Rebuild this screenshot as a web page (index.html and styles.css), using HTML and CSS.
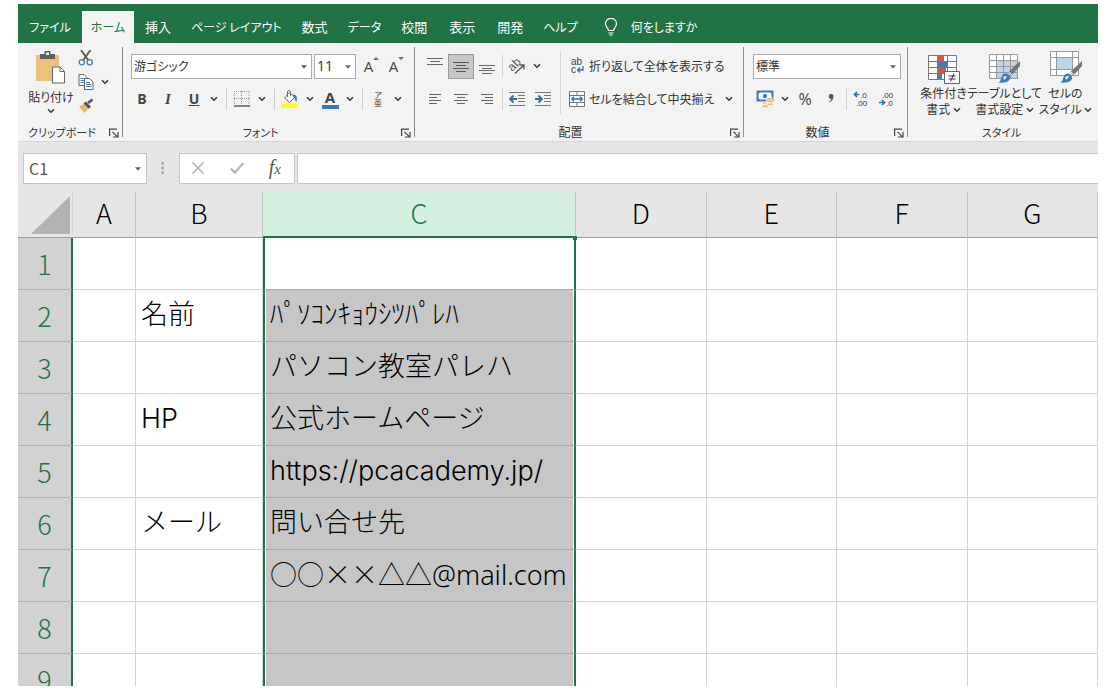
FILE: index.html
```html
<!DOCTYPE html>
<html lang="ja">
<head>
<meta charset="utf-8">
<meta name="viewport" content="width=device-width, initial-scale=1">
<title>Excel</title>
<link rel="stylesheet" href="styles.css">
</head>
<body>
<svg class="defs" aria-hidden="true">
  <symbol id="chev" viewBox="0 0 8 6"><path d="M1 1.2 4 4.2 7 1.2" fill="none" stroke="#333" stroke-width="1.4"/></symbol>
  <symbol id="tri" viewBox="0 0 6 4"><path d="M0 .3h6L3 3.7z" fill="#666"/></symbol>
  <symbol id="launch" viewBox="0 0 10 10"><path d="M.6 8V1.1H8M3.5 3.8l4.6 4.6M9 4v5H4" fill="none" stroke="#444" stroke-width="1.2"/></symbol>
  <symbol id="brush" viewBox="0 0 24 24">
    <path d="M23 1v5l-8.500 9.500-3.500-3.300z" fill="#777"/>
    <path d="m11.500 11.500 3.500 3.500" stroke="#fff" stroke-width="1"/>
    <path d="M1 22.500c3-.5 2.500-4 4-6.500 2-3.200 5.500-3 7.300-.8 1.800 2.300.7 5.300-2.300 6.600-2.500 1.100-6 1-9 .7z" fill="#3d7cba"/>
    <path d="M6 18c.8-2 2.300-2.600 4.300-1.500-1 .4-1.500 2.700-3 3.200z" fill="#dceaf7"/>
  </symbol>
</svg>
<div class="app">
  <nav class="tabs">
    <a class="tab kana file" href="#file">ファイル</a>
    <a class="tab kana active" href="#home">ホーム</a>
    <a class="tab" href="#insert">挿入</a>
    <a class="tab kana" href="#layout">ページ レイアウト</a>
    <a class="tab" href="#formula">数式</a>
    <a class="tab kana" href="#data">データ</a>
    <a class="tab" href="#review">校閲</a>
    <a class="tab" href="#view">表示</a>
    <a class="tab" href="#dev">開発</a>
    <a class="tab kana" href="#help">ヘルプ</a>
    <button class="tell" type="button">
      <svg width="14" height="18" viewBox="0 0 14 18"><path d="M4.500 12.500c0-2.500-3-3.500-3-6.700a5.500 5.500 0 0 1 11 0c0 3.200-3 4.200-3 6.700zM4.500 15h5M5.500 17h3" fill="none" stroke="#fff" stroke-width="1.200"/></svg>
      何をしますか
    </button>
  </nav>

  <div class="ribbon">
    <section class="group clip">
      <div class="body">
        <button class="big paste" type="button">
          <svg width="32" height="34" viewBox="0 0 32 34"><path d="M1 4h23v26H1z" fill="#e9c27b"/><path d="M5 8V3h4.500V0h6v3H20v5z" fill="#5f5f5f"/><path d="M11 1.500h3V4h-3z" fill="#f3f3f3"/><path d="M17.500 16h7.500l4.500 4.500V32h-12z" fill="#fff" stroke="#666"/><path d="M25 16v4.500h4.500" fill="none" stroke="#666"/></svg>
          <span>貼り付け</span>
          <svg width="8" height="6"><use href="#chev"/></svg>
        </button>
        <div class="minis">
          <button class="ico" type="button" aria-label="切り取り"><svg width="16" height="16" viewBox="0 0 16 16"><path d="m3 0 7.500 10.500M12.500 0 5 10.500" stroke="#5a5a5a" stroke-width="1.900"/><circle cx="3.800" cy="12.300" r="2.600" fill="none" stroke="#4a7db8" stroke-width="1.300"/><circle cx="11.700" cy="12.300" r="2.600" fill="none" stroke="#4a7db8" stroke-width="1.300"/></svg></button>
          <div class="pair">
            <button class="ico" type="button" aria-label="コピー"><svg width="16" height="16" viewBox="0 0 16 16"><path d="M1 .5h5l3 3v8H1z" fill="#fff" stroke="#666"/><path d="M2.500 4.500h4M2.500 6.500h4M2.500 8.500h4" stroke="#4a7db8"/><path d="M6.500 4.500h5l3.500 3.500v7.500H6.500z" fill="#fff" stroke="#666"/><path d="M8 8.500h4M8 10.500h5.500M8 12.500h5.500" stroke="#4a7db8"/></svg></button>
            <button class="drop" type="button" aria-label="コピーのオプション"><svg width="8" height="6"><use href="#chev"/></svg></button>
          </div>
          <button class="ico" type="button" aria-label="書式のコピー"><svg width="16" height="16" viewBox="0 0 16 16"><path d="M1 8.500 6 6l4.500 4.500L6.500 15z" fill="#e9b766"/><path d="m5.500 5.500 2.300-2 5.200 5.200-2.300 2z" fill="#555"/><path d="m10 5 4.500-3.500" stroke="#555" stroke-width="2.600"/></svg></button>
        </div>
      </div>
      <footer class="kana"><span>クリップボード</span><button class="launcher" type="button" aria-label="クリップボードの詳細"><svg width="10" height="10"><use href="#launch"/></svg></button></footer>
    </section>

    <section class="group font">
      <div class="row">
        <span class="combo name"><select aria-label="フォント名"><option>游ゴシック</option></select><svg width="6" height="4"><use href="#tri"/></svg></span>
        <span class="combo size"><select aria-label="フォント サイズ"><option>11</option></select><svg width="6" height="4"><use href="#tri"/></svg></span>
        <button class="ico grow" type="button" aria-label="フォント サイズの拡大"><span>A</span><svg width="6" height="4" viewBox="0 0 6 4"><path d="M0 3 3 0l3 3z" fill="#3d7cba"/></svg></button>
        <button class="ico grow" type="button" aria-label="フォント サイズの縮小"><span>A</span><svg width="6" height="4" viewBox="0 0 6 4"><path d="M0 0h6L3 3z" fill="#3d7cba"/></svg></button>
      </div>
      <div class="row tight">
        <button class="ico bold" type="button">B</button>
        <button class="ico italic" type="button">I</button>
        <button class="ico under" type="button">U</button>
        <button class="drop" type="button" aria-label="下線"><svg width="8" height="6"><use href="#chev"/></svg></button>
        <i class="sep"></i>
        <button class="ico" type="button" aria-label="罫線"><svg width="16" height="16" viewBox="0 0 16 16"><path d="M.5 0v15M15 0v15M0 .5h16M7.500 0v15M0 7.500h16" stroke="#999" stroke-dasharray="1 1"/><path d="M0 15h16" stroke="#555" stroke-width="1.400"/></svg></button>
        <button class="drop" type="button" aria-label="罫線のオプション"><svg width="8" height="6"><use href="#chev"/></svg></button>
        <i class="sep"></i>
        <button class="ico" type="button" aria-label="塗りつぶしの色"><svg width="18" height="18" viewBox="0 0 18 18"><path d="M0 13.500h17V18H0z" fill="#ff0"/><path d="m8.500 2.500 5.500 5-5.500 5-5-4.500z" fill="#fff" stroke="#666"/><path d="M6.500 7V2c0-2 3-2 3 0v4" fill="none" stroke="#666"/><path d="M12 4.500c4 0 4.500 3 3.500 7.500-2-1-.500-4-3.500-5z" fill="#3d7cba"/></svg></button>
        <button class="drop" type="button" aria-label="塗りつぶしのオプション"><svg width="8" height="6"><use href="#chev"/></svg></button>
        <button class="ico color" type="button" aria-label="フォントの色"><span>A</span></button>
        <button class="drop" type="button" aria-label="フォントの色のオプション"><svg width="8" height="6"><use href="#chev"/></svg></button>
        <i class="sep"></i>
        <button class="ico ruby" type="button"><span>ア</span><span>亜</span></button>
        <button class="drop" type="button" aria-label="ふりがな"><svg width="8" height="6"><use href="#chev"/></svg></button>
      </div>
      <footer class="kana"><span>フォント</span><button class="launcher" type="button" aria-label="フォントの詳細"><svg width="10" height="10"><use href="#launch"/></svg></button></footer>
    </section>

    <section class="group align">
      <div class="body">
        <div class="left">
          <div class="row tight">
            <button class="ico" type="button" aria-label="上揃え"><svg width="16" height="18" viewBox="0 0 16 18"><path d="M0 1.500h16M3 4.500h10M0 7.500h16" stroke="#666"/></svg></button>
            <button class="ico on" type="button" aria-label="上下中央揃え"><svg width="16" height="18" viewBox="0 0 16 18"><path d="M0 5.500h16M3 8.500h10M0 11.500h16M3 14.500h10" stroke="#555"/></svg></button>
            <button class="ico" type="button" aria-label="下揃え"><svg width="16" height="18" viewBox="0 0 16 18"><path d="M0 8.500h16M3 11.500h10M0 13.500h16M3 16.500h10" stroke="#666"/></svg></button>
            <i class="sep near"></i>
            <button class="ico" type="button" aria-label="方向"><svg width="18" height="18" viewBox="0 0 18 18"><text x="1" y="13" font-size="12" fill="#555" transform="rotate(-45 5 10)">ab</text><path d="M7 16.500 16 8M11.500 8H16v4.500" fill="none" stroke="#555" stroke-width="1.300"/></svg></button>
            <button class="drop" type="button" aria-label="方向のオプション"><svg width="8" height="6"><use href="#chev"/></svg></button>
          </div>
          <div class="row tight">
            <button class="ico" type="button" aria-label="左揃え"><svg width="14" height="12" viewBox="0 0 14 12"><path d="M1 1.500h12M1 4.500h8M1 7.500h12M1 10.500h8" stroke="#666"/></svg></button>
            <button class="ico" type="button" aria-label="中央揃え"><svg width="14" height="12" viewBox="0 0 14 12"><path d="M0 1.500h14M3 4.500h8M0 7.500h14M3 10.500h8" stroke="#666"/></svg></button>
            <button class="ico" type="button" aria-label="右揃え"><svg width="14" height="12" viewBox="0 0 14 12"><path d="M1 1.500h12M5 4.500h8M1 7.500h12M5 10.500h8" stroke="#666"/></svg></button>
            <i class="sep near"></i>
            <button class="ico" type="button" aria-label="インデントを減らす"><svg width="16" height="14" viewBox="0 0 16 14"><path d="M0 .5h16M9 3.500h7M9 6.500h7M9 9.500h7M0 13.500h16" stroke="#777"/><path d="M8 7H2M4.500 3.500 1.200 7l3.300 3.500" fill="none" stroke="#3470b0" stroke-width="2"/></svg></button>
            <button class="ico" type="button" aria-label="インデントを増やす"><svg width="16" height="14" viewBox="0 0 16 14"><path d="M0 .5h16M9 3.500h7M9 6.500h7M9 9.500h7M0 13.500h16" stroke="#777"/><path d="M0 7h6M3.500 3.500 6.800 7l-3.300 3.500" fill="none" stroke="#3470b0" stroke-width="2"/></svg></button>
          </div>
        </div>
        <div class="right">
          <div class="row"><button class="wide" type="button"><svg width="16" height="18" viewBox="0 0 16 18"><text x="2" y="8" font-size="10" fill="#444">ab</text><text x="2" y="16" font-size="10" fill="#444">c</text><path d="M14 9v4H8.500M11 10.500 8.500 13l2.500 2.500" fill="none" stroke="#3d6fb0" stroke-width="1.300"/></svg>折り返して全体を表示する</button></div>
          <div class="row"><button class="wide" type="button"><svg width="16" height="16" viewBox="0 0 16 16"><path d="M.5.500h15v15H.5zM8 0v4M8 12v4M.5 4.500h15M.5 11.500h15" fill="#fff" stroke="#777"/><path d="M2.500 8h11M5 5.800 2.700 8 5 10.200M11 5.800 13.300 8 11 10.200" fill="none" stroke="#3470b0" stroke-width="1.300"/></svg>セルを結合して中央揃え</button><button class="drop" type="button" aria-label="結合のオプション"><svg width="8" height="6"><use href="#chev"/></svg></button></div>
        </div>
      </div>
      <footer><span>配置</span><button class="launcher" type="button" aria-label="配置の詳細"><svg width="10" height="10"><use href="#launch"/></svg></button></footer>
    </section>

    <section class="group number">
      <div class="row"><span class="combo fmt"><select aria-label="数値の書式"><option>標準</option></select><svg width="6" height="4"><use href="#tri"/></svg></span></div>
      <div class="row tight">
        <button class="ico" type="button" aria-label="通貨表示形式"><svg width="18" height="18" viewBox="0 0 18 18"><path d="M1.500 1.500h15v9h-15z" fill="#fff" stroke="#3d7cba" stroke-width="2"/><path d="M1 1h4L1 5zM17 1h-4l4 4zM1 11h4L1 7z" fill="#3d7cba"/><circle cx="9" cy="6" r="2.200" fill="#3d7cba"/><ellipse cx="13.500" cy="8.800" rx="3.500" ry="1.600" fill="#edb868" stroke="#fff" stroke-width=".6"/><path d="M10 10.500h7v2h-7zM10 13.200h7v2h-7zM6.500 12.200h5v2h-5zM6.500 15h5.500v2.500H6.500z" fill="#edb868" stroke="#fff" stroke-width=".4"/></svg></button>
        <button class="drop" type="button" aria-label="通貨のオプション"><svg width="8" height="6"><use href="#chev"/></svg></button>
        <button class="ico pct" type="button">%</button>
        <button class="ico" type="button" aria-label="桁区切り"><svg width="8" height="12" viewBox="0 0 8 12"><path d="M4 1a2.300 2.300 0 0 1 2.400 2.600C6.400 6.500 5 8.300 2.600 9.300L2.200 8.500C3.500 7.800 4.200 6.900 4.300 5.700 2.700 5.900 1.700 4.800 1.700 3.400A2.300 2.300 0 0 1 4 1z" fill="#555"/></svg></button>
        <i class="sep near"></i>
        <button class="ico" type="button" aria-label="小数点以下の表示桁数を増やす"><svg width="16" height="18" viewBox="0 0 16 18"><path d="M6.500 4.500h-5M4 2 1.500 4.500 4 7" fill="none" stroke="#3470b0" stroke-width="1.700"/><text x="7" y="8" font-size="8" fill="#333">.0</text><text x="3" y="16" font-size="8" fill="#333">.00</text></svg></button>
        <button class="ico" type="button" aria-label="小数点以下の表示桁数を減らす"><svg width="16" height="18" viewBox="0 0 16 18"><text x="3" y="8" font-size="8" fill="#333">.00</text><path d="M0 12.500h5M3 10l2.500 2.500L3 15" fill="none" stroke="#3470b0" stroke-width="1.700"/><text x="7" y="16" font-size="8" fill="#333">.0</text></svg></button>
      </div>
      <footer><span>数値</span><button class="launcher" type="button" aria-label="数値の詳細"><svg width="10" height="10"><use href="#launch"/></svg></button></footer>
    </section>

    <section class="group styles">
      <div class="body">
        <button class="big" type="button">
          <svg width="34" height="34" viewBox="0 0 34 34"><path d="M1.500 4.500h28v24h-28z" fill="#fff"/><path d="M11 5h6v5h-6z" fill="#d5593a"/><path d="M11 11h9v5h-9z" fill="#3d7cba"/><path d="M11 17h8v5h-8z" fill="#d5593a"/><path d="M11 23h4v5h-4z" fill="#3d7cba"/><path d="M1.500 4.500h28v24h-28zM1.500 10.500h28M1.500 16.500h28M1.500 22.500h28M10.500 4v24M20.500 4v24" fill="none" stroke="#777"/><path d="M17.500 20.500h15v12h-15z" fill="#fff" stroke="#666"/><path d="M21.500 25h7M21.500 28h7M27 22.500l-3.500 8" stroke="#333" stroke-width="1"/></svg>
          <span>条件付き<br>書式 <svg width="8" height="6"><use href="#chev"/></svg></span>
        </button>
        <button class="big" type="button">
          <svg width="34" height="34" viewBox="0 0 34 34"><path d="M1.500 3.500h28v24h-28z" fill="#fff"/><path d="M8 9h21v18H8z" fill="#bdd4ea"/><path d="M1.500 3.500h28v24h-28zM1.500 9.500h28M1.500 15.500h28M1.500 21.500h28M8.500 3v24M15.500 3v24M22.500 3v24" fill="none" stroke="#999"/><use href="#brush" x="9" y="9" width="24" height="24"/></svg>
          <span>テーブルとして<br>書式設定 <svg width="8" height="6"><use href="#chev"/></svg></span>
        </button>
        <button class="big" type="button">
          <svg width="34" height="34" viewBox="0 0 34 34"><path d="M1.500.500h28v24h-28z" fill="#fff"/><path d="M8 7h15v11H8z" fill="#bdd4ea"/><path d="M1.500.500h28v24h-28zM1.500 6.500h28M1.500 18.500h28M7.500 0v24M23.500 0v24" fill="none" stroke="#999"/><use href="#brush" x="10" y="9" width="24" height="24"/></svg>
          <span>セルの<br>スタイル <svg width="8" height="6"><use href="#chev"/></svg></span>
        </button>
      </div>
      <footer class="kana"><span>スタイル</span></footer>
    </section>
  </div>

  <div class="formula">
    <span class="combo cellref"><select aria-label="名前ボックス"><option>C1</option></select><svg width="6" height="4"><use href="#tri"/></svg></span>
    <svg class="dots" width="4" height="12" viewBox="0 0 4 12"><path d="M.5 0h2.500v2.500H.5zM.5 4.700h2.500v2.500H.5zM.5 9.400h2.500v2.500H.5z" fill="#a8a8a8"/></svg>
    <div class="fx">
      <button type="button" aria-label="キャンセル"><svg width="14" height="12" viewBox="0 0 14 12"><path d="m1.500.5 11 11M12.500.5l-11 11" stroke="#b4b4b4" stroke-width="1.600"/></svg></button>
      <button type="button" aria-label="入力"><svg width="14" height="12" viewBox="0 0 14 12"><path d="M.8 6.500 5 10.500l8.300-9.500" fill="none" stroke="#b8b8b8" stroke-width="2.400"/></svg></button>
      <button class="fn" type="button" aria-label="関数の挿入">f<small>x</small></button>
    </div>
    <input class="bar" type="text" aria-label="数式バー">
  </div>

  <div class="sheet">
    <table>
      <colgroup><col class="c0"><col class="ca"><col class="cb"><col class="cc"><col><col><col><col></colgroup>
      <thead>
        <tr><th class="corner"><svg width="39" height="38" viewBox="0 0 39 38"><path d="M39 0v38H0z" fill="#b3b3b3"/></svg></th><th>A</th><th>B</th><th class="sel">C<i class="handle"></i></th><th>D</th><th>E</th><th>F</th><th>G</th></tr>
      </thead>
      <tbody>
        <tr><th>1</th><td></td><td></td><td class="sel first"></td><td></td><td></td><td></td><td></td></tr>
        <tr><th>2</th><td></td><td>名前</td><td class="sel">ﾊﾟｿｺﾝｷｮｳｼﾂﾊﾟﾚﾊ</td><td></td><td></td><td></td><td></td></tr>
        <tr><th>3</th><td></td><td></td><td class="sel">パソコン教室パレハ</td><td></td><td></td><td></td><td></td></tr>
        <tr><th>4</th><td></td><td><span class="latin">HP</span></td><td class="sel">公式ホームページ</td><td></td><td></td><td></td><td></td></tr>
        <tr><th>5</th><td></td><td></td><td class="sel"><span class="latin">https://pcacademy.jp/</span></td><td></td><td></td><td></td><td></td></tr>
        <tr><th>6</th><td></td><td>メール</td><td class="sel">問い合せ先</td><td></td><td></td><td></td><td></td></tr>
        <tr><th>7</th><td></td><td></td><td class="sel"><span class="jp">○○××△△</span>@mail.com</td><td></td><td></td><td></td><td></td></tr>
        <tr><th>8</th><td></td><td></td><td class="sel"></td><td></td><td></td><td></td><td></td></tr>
        <tr><th>9</th><td></td><td></td><td class="sel"></td><td></td><td></td><td></td><td></td></tr>
      </tbody>
    </table>
  </div>
</div>
</body>
</html>
```
FILE: styles.css
```css
* { box-sizing: border-box; }
body {
  margin: 0;
  background: #fff;
  color: #333;
  font: 12px/16px "Noto Sans CJK JP", sans-serif;
  font-feature-settings: "palt";
}
.defs { position: absolute; width: 0; height: 0; }
svg { display: block; flex: none; }
svg text { font-family: "Liberation Sans", sans-serif; }
button, select, input {
  margin: 0;
  padding: 0;
  border: 0;
  background: none;
  color: inherit;
  font: inherit;
  font-feature-settings: inherit;
}
.app {
  display: flex;
  flex-direction: column;
  height: 100vh;
  padding: 4px 20px 7px 18px;
  overflow: hidden;
}

/* tabs */
.tabs {
  display: flex;
  flex: none;
  height: 39px;
  padding-top: 7px;
  background: #217346;
  color: #fff;
  white-space: nowrap;
}
.tab {
  display: flex;
  align-items: center;
  padding: 0 11px 1px;
  color: #fff;
  font-size: 13px;
  text-decoration: none;
}
.tab.kana { padding: 0 9px 1px; font-size: 12px; }
.tab.file { width: 64px; justify-content: center; }
.tab.active {
  width: 52px;
  justify-content: center;
  background: #f3f3f3;
  color: #217346;
}
.tell { display: flex; align-items: center; gap: 13px; padding-left: 17px; }

/* ribbon */
.ribbon {
  display: flex;
  flex: none;
  height: 99px;
  background: #f3f3f3;
  border-bottom: 1px solid #d6d6d6;
}
.group {
  position: relative;
  display: flex;
  flex-direction: column;
  gap: 3px;
  padding: 8px 0 0 8px;
}
.group:not(.styles)::after {
  content: "";
  position: absolute;
  top: 4px;
  right: 0;
  bottom: 4px;
  width: 1px;
  background: #8c8c8c;
}
.clip { width: 105px; padding-left: 6px; }
.font { width: 292px; }
.align { width: 329px; padding-left: 7px; }
.number { width: 164px; }
.styles { flex: 1; padding-left: 5px; }
.group footer {
  display: flex;
  align-items: center;
  height: 18px;
  margin: auto 0 0 -8px;
}
.group footer span { flex: 1; text-align: center; }
.group footer.kana { font-size: 11px; }
.clip footer { margin-left: -6px; }
.launcher { width: 17px; padding: 1px 0 0 3px; }
.body { display: flex; }
.row { display: flex; align-items: center; gap: 2px; height: 30px; }
.row.tight { gap: 0; }
.font .row.tight { margin-left: -2px; }
.left, .right { display: flex; flex-direction: column; gap: 3px; }
.left { width: 139px; border-right: 1px solid #d4d4d4; }
.right { padding-left: 8px; }
.ico {
  display: flex;
  align-items: center;
  justify-content: center;
  flex: none;
  width: 26px;
  height: 26px;
  color: #444;
}
.ico.on { height: 25px; background: #c6c6c6; border: 1px solid #9a9a9a; }
.drop {
  display: flex;
  align-items: center;
  justify-content: center;
  flex: none;
  width: 14px;
  height: 24px;
}
.sep { flex: none; width: 1px; height: 22px; margin: 0 2px 0 5px; background: #d0d0d0; }
.sep.near { margin: 0 1px 0 2px; }
.wide { display: flex; align-items: center; gap: 4px; white-space: nowrap; }
.right .drop { margin-left: 6px; }
.combo { position: relative; display: block; height: 25px; }
.combo select {
  appearance: none;
  display: block;
  width: 100%;
  height: 100%;
  padding: 0 2px;
  background: #fff;
  border: 1px solid #ababab;
  border-radius: 0;
}
.combo svg { position: absolute; right: 5px; top: 11px; pointer-events: none; }
.combo.name { width: 181px; }
.combo.size { width: 42px; margin-right: 2px; font-family: "Open Sans", sans-serif; font-size: 14px; }
.combo.fmt { width: 148px; margin-left: 1px; }
.grow { align-items: flex-start; width: 23px; height: 18px; font: 15px/18px "Open Sans", sans-serif; }
.bold { font: 700 14px/18px "Open Sans", sans-serif; }
.italic { font: italic 700 15px/18px "Liberation Serif", serif; }
.under { font: 700 14px/16px "Open Sans", sans-serif; text-decoration: underline; }
.color span {
  width: 17px;
  height: 19px;
  border-bottom: 4px solid #4472c4;
  font: 700 15px/14px "Open Sans", sans-serif;
  text-align: center;
}
.ruby { flex-direction: column; font-size: 8px; line-height: 8px; }
.pct { font: 16px/18px "Open Sans", sans-serif; }
.big { display: flex; flex-direction: column; align-items: center; white-space: nowrap; }
.big span svg { display: inline-block; vertical-align: 1px; }
.paste { width: 52px; gap: 5px; padding-left: 2px; height: 64px; }
.paste span { line-height: 13px; }
.minis { display: flex; flex-direction: column; margin-top: -5px; }
.minis .ico { width: 20px; height: 24px; }
.pair { display: flex; }
.pair .drop { margin-left: 2px; }
.styles .big { width: 61px; }
.styles .body { height: 66px; }

/* formula bar */
.formula {
  display: flex;
  flex: none;
  align-items: center;
  height: 50px;
  padding: 2px 0 0 5px;
  background: #e6e6e6;
}
.formula .combo { width: 124px; height: 31px; color: #555; font: 16px/20px "Noto Sans CJK JP", sans-serif; }
.formula .combo select { padding: 0 5px; border-color: #c6c6c6; }
.formula .combo svg { top: 14px; right: 6px; }
.dots { margin: 0 14px; }
.fx {
  display: flex;
  align-items: center;
  justify-content: space-between;
  width: 116px;
  height: 31px;
  margin-right: 2px;
  padding: 0 13px 0 11px;
  background: #fff;
  border: 1px solid #c6c6c6;
}
.fn { color: #555; font: italic 20px/20px "Liberation Serif", serif; }
.fn small { font-size: 15px; }
.bar { flex: 1; min-width: 0; height: 31px; padding: 0 6px; background: #fff; border: 1px solid #c6c6c6; border-right: 0; }

/* sheet */
.sheet {
  flex: 1;
  min-height: 0;
  overflow: hidden;
  background: #fff;
  color: #000;
  font: 300 27px/34px "Noto Sans", "Noto Sans CJK JP", sans-serif;
  font-feature-settings: normal;
}
table { width: 100%; table-layout: fixed; border-collapse: separate; border-spacing: 0; }
.c0 { width: 55px; }
.ca { width: 63px; }
.cb { width: 127px; }
.cc { width: 313px; }
th, td { padding: 0; white-space: nowrap; border-right: 1px solid #d4d4d4; border-bottom: 1px solid #d4d4d4; }
th { font: 300 27px/34px "Noto Sans CJK JP", sans-serif; }
td { height: 52px; padding: 0 0 3px 5px; }
thead th { height: 46px; padding-bottom: 3px; background: #e6e6e6; border-right-color: #c4c4c4; border-bottom-color: #9f9f9f; }
thead th.corner { padding: 4px 2px 3px 13px; border-right-color: #d8d8d8; }
thead th.sel {
  position: relative;
  background: #d3f0e0;
  color: #217346;
  border-bottom: 2px solid #217346;
}
.handle {
  position: absolute;
  right: -2px;
  bottom: -4px;
  width: 4px;
  height: 4px;
  background: #217346;
}
tbody th {
  background: #d2d2d2;
  color: #217346;
  border-right: 2px solid #217346;
  border-bottom-color: #b4b4b4;
}
td.sel {
  background: #c6c6c6;
  border-right: 2px solid #217346;
  border-left: 2px solid #217346;
  border-bottom-color: #aaa;
  box-shadow: inset 1px 0 #fff, inset -1px 0 #fff;
}
td.first { background: #fff; }
.jp { font-family: "Noto Sans CJK JP", sans-serif; }
.latin { font-family: Inter, "Noto Sans", sans-serif; }
```
